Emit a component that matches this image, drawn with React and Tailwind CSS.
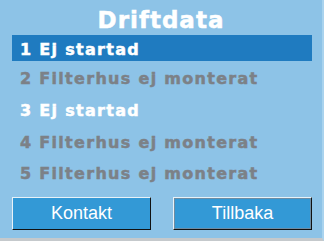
import React from "react";

const rows = [
  { n: 1, label: "Ej startad", active: true, on: true },
  { n: 2, label: "Filterhus ej monterat", on: false },
  { n: 3, label: "Ej startad", on: true },
  { n: 4, label: "Filterhus ej monterat", on: false },
  { n: 5, label: "Filterhus ej monterat", on: false },
];

const App = () => {
  return (
    <div className="w-[324px] h-[244px] bg-white">
      <div className="w-[324px] h-[241px] bg-[#8dc3e7] border-b-[3px] border-r-[2px] border-b-[#c5c9cc] border-r-[#a9d3ee] flex flex-col font-['DejaVu_Sans',sans-serif]">
        {/* Title */}
        <div className="h-[35px] flex items-center justify-center text-white font-bold text-[23px] tracking-[1px] leading-none pt-[6px] [-webkit-text-stroke:0.5px_currentColor]">
          Driftdata
        </div>

        {/* Rows */}
        <div className="ml-[12px] w-[300px] flex flex-col">
          {rows.map((r, i) => (
            <div
              key={r.n}
              className={
                (r.active
                  ? "h-[26px] bg-[#1f7bc0] "
                  : i === 4
                  ? "h-[30px] "
                  : "h-[32px] ") +
                "flex items-center px-[8px] pt-[3px] font-bold text-[16px] tracking-[1.3px] leading-none [-webkit-text-stroke:0.5px_currentColor] " +
                (r.on ? "text-white" : "text-[#7c8187]")
              }
            >
              {r.n} {r.label}
            </div>
          ))}
        </div>

        {/* Buttons */}
        <div className="mt-[10px] pl-[12px] w-[312px] flex justify-between font-['Liberation_Sans',sans-serif]">
          <button className="w-[139px] h-[33px] bg-[#3399d6] text-white text-[18px] border border-t-[#e8f2f8] border-l-[#e8f2f8] border-b-[#111] border-r-[#111] flex items-center justify-center">
            Kontakt
          </button>
          <button className="w-[139px] h-[33px] bg-[#3399d6] text-white text-[18px] border border-t-[#e8f2f8] border-l-[#e8f2f8] border-b-[#111] border-r-[#111] flex items-center justify-center">
            <span className="w-full h-full border border-[#6d8ca3] flex items-center justify-center">
              Tillbaka
            </span>
          </button>
        </div>
      </div>
    </div>
  );
};

export default App;
